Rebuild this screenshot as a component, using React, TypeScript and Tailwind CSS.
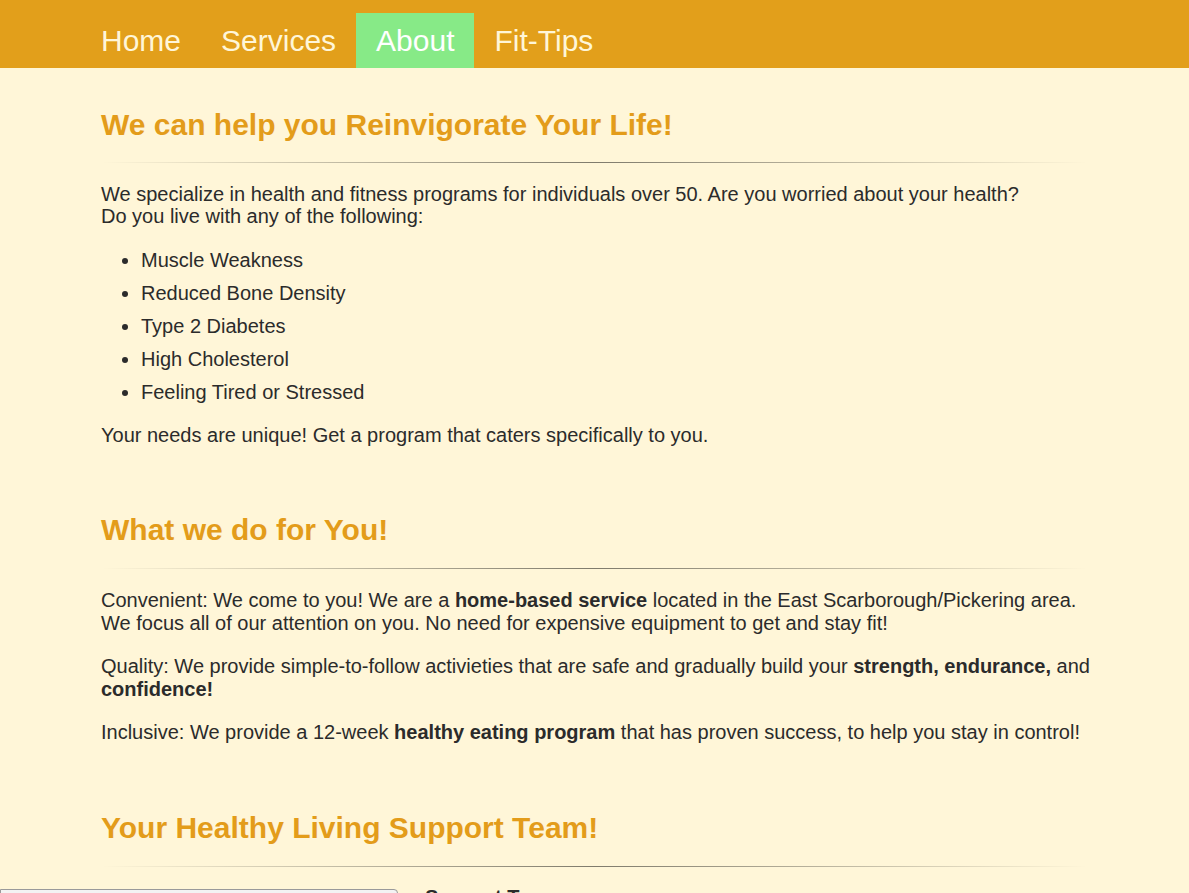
const navLinks = ["Home", "Services", "About", "Fit-Tips"]

const conditions = [
  "Muscle Weakness",
  "Reduced Bone Density",
  "Type 2 Diabetes",
  "High Cholesterol",
  "Feeling Tired or Stressed",
]

function Divider() {
  return (
    <div className="mr-[10px] h-px bg-[linear-gradient(to_right,rgba(0,0,0,0),rgba(0,0,0,0.5),rgba(0,0,0,0))]" />
  )
}

function Heading({ children, className = "" }: { children: React.ReactNode; className?: string }) {
  return (
    <h2 className={`text-[30px] font-bold leading-[36px] text-[#e39c1a] ${className}`}>{children}</h2>
  )
}

export default function App() {
  return (
    <div className="h-[893px] overflow-hidden bg-[#fff6d8] font-['Liberation_Sans',Arial,sans-serif] text-[#2b2b2b]">
      <nav className="flex h-[68px] bg-[#e29f1b] pl-[81px] pt-[13px]">
        {navLinks.map((link) => (
          <a
            key={link}
            href="#"
            className={`flex h-[55px] items-center px-5 text-[30px] ${
              link === "About" ? "bg-[#87ea87] text-white" : "text-[#fff6d8]"
            }`}
          >
            {link}
          </a>
        ))}
      </nav>

      <main className="ml-[101px] mr-[91px] text-[20px] leading-[22px]">
        <Heading className="mt-[39px]">We can help you Reinvigorate Your Life!</Heading>
        <div className="mt-[19px]">
          <Divider />
        </div>
        <p className="mt-5">
          We specialize in health and fitness programs for individuals over 50. Are you worried about your health?
          <br />
          Do you live with any of the following:
        </p>
        <ul className="mt-[22px] list-disc pl-10">
          {conditions.map((item) => (
            <li key={item} className="mb-[11px]">
              {item}
            </li>
          ))}
        </ul>
        <p className="mt-[21px]">Your needs are unique! Get a program that caters specifically to you.</p>

        <Heading className="mt-[66px]">What we do for You!</Heading>
        <div className="mt-5">
          <Divider />
        </div>
        <p className="mt-5 leading-[22.5px]">
          Convenient: We come to you! We are a <b>home-based service</b> located in the East Scarborough/Pickering area.
          We focus all of our attention on you. No need for expensive equipment to get and stay fit!
        </p>
        <p className="mt-[21px] leading-[22.5px]">
          Quality: We provide simple-to-follow activieties that are safe and gradually build your{" "}
          <b>strength, endurance,</b> and <b>confidence!</b>
        </p>
        <p className="mt-[21px]">
          Inclusive: We provide a 12-week <b>healthy eating program</b> that has proven success, to help you stay in
          control!
        </p>

        <Heading className="mt-[67px]">Your Healthy Living Support Team!</Heading>
        <div className="mt-5">
          <Divider />
        </div>
        <div className="mt-[22px] flex items-start">
          <div className="-ml-[101px] h-[220px] w-[398px] shrink-0 rounded-tr-sm border border-[#9a9a9a] bg-[#f3f3f3]" />
          <h3 className="ml-[27px] -mt-[3px] text-[20px] font-bold">Support Team</h3>
        </div>
      </main>
    </div>
  )
}
